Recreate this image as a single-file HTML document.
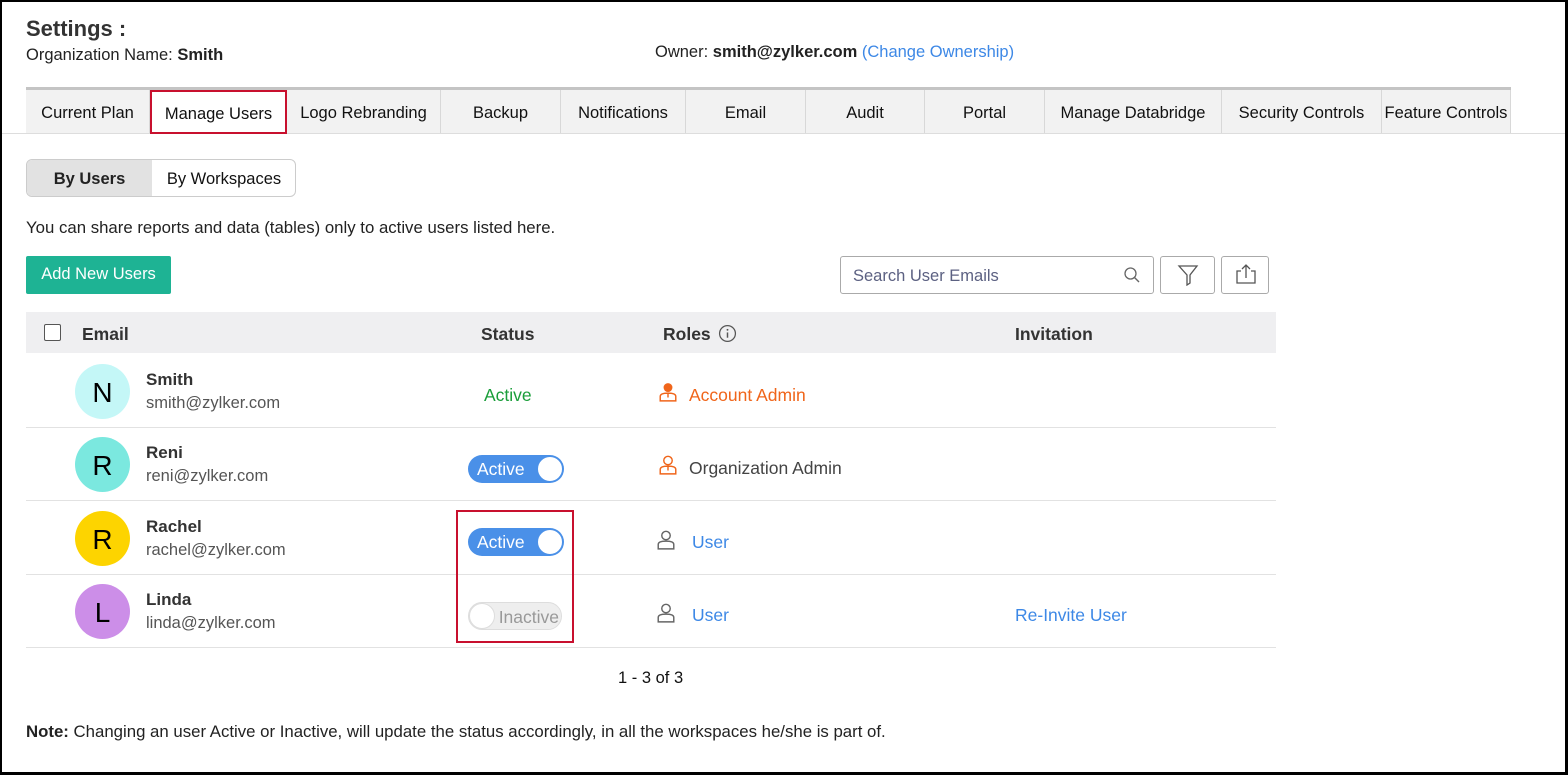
<!DOCTYPE html>
<html><head><meta charset="utf-8"><style>
*{box-sizing:border-box;margin:0;padding:0}
body{width:1568px;height:775px;overflow:hidden;background:#fff;font-family:"Liberation Sans",sans-serif;color:#222;position:relative}
.frame{position:absolute;left:0;top:0;width:1568px;height:775px;border:2px solid #000;border-right-width:3px;border-bottom-width:3px}
.a{position:absolute;white-space:nowrap}
.tab{position:absolute;top:90px;height:43px;background:#f2f2f2;border-right:1px solid #d8d8d8;font-size:16.5px;line-height:47px;text-align:center;color:#111}
.row{position:absolute;left:26px;width:1250px;border-bottom:1px solid #e2e2e2}
.av{position:absolute;left:75px;width:55px;height:55px;border-radius:50%;font-size:28px;line-height:57px;text-align:center;color:#000}
.nm{position:absolute;left:146px;font-size:17px;font-weight:bold;color:#333}
.em{position:absolute;left:146px;font-size:16.5px;color:#555}
.tg{position:absolute;left:468px;width:96px;height:28px;border-radius:14px;background:#4a90e8;color:#fff;font-size:17.5px;line-height:29px;padding-left:9px}
.tg i{position:absolute;right:1px;top:1px;width:26px;height:26px;border-radius:50%;background:#fff;border:1px solid #4a90e8}
.blue{color:#3d88e6}
</style></head><body>
<div class="a" style="left:26px;top:16px;font-size:22px;font-weight:bold;color:#333">Settings :</div>
<div class="a" style="left:26px;top:46px;font-size:16.5px;color:#222">Organization Name: <b>Smith</b></div>
<div class="a" style="left:655px;top:43px;font-size:16.5px;color:#222">Owner: <b>smith@zylker.com</b> <span class="blue">(Change Ownership)</span></div>
<div class="a" style="left:26px;top:87px;width:1485px;height:3px;background:#c4c4c4"></div>
<div class="a" style="left:0;top:133px;width:1568px;height:1px;background:#ddd"></div>
<div class="tab" style="left:26px;width:124px">Current Plan</div>
<div class="tab" style="left:150px;width:137px;background:#fff;border:2px solid #c8102e;top:90px;height:44px;line-height:44px">Manage Users</div>
<div class="tab" style="left:287px;width:154px">Logo Rebranding</div>
<div class="tab" style="left:441px;width:120px">Backup</div>
<div class="tab" style="left:561px;width:125px">Notifications</div>
<div class="tab" style="left:686px;width:120px">Email</div>
<div class="tab" style="left:806px;width:119px">Audit</div>
<div class="tab" style="left:925px;width:120px">Portal</div>
<div class="tab" style="left:1045px;width:177px">Manage Databridge</div>
<div class="tab" style="left:1222px;width:160px">Security Controls</div>
<div class="tab" style="left:1382px;width:129px">Feature Controls</div>

<div class="a" style="left:26px;top:159px;width:270px;height:38px;border:1px solid #ccc;border-radius:6px;overflow:hidden">
<div class="a" style="left:0;top:0;width:125px;height:36px;background:#e2e2e2;font-weight:bold;font-size:16.5px;line-height:39px;text-align:center;color:#222">By Users</div>
<div class="a" style="left:125px;top:0;width:144px;height:36px;font-size:16.5px;line-height:39px;text-align:center;color:#111">By Workspaces</div></div>
<div class="a" style="left:26px;top:218px;font-size:16.8px;color:#222">You can share reports and data (tables) only to active users listed here.</div>
<div class="a" style="left:26px;top:256px;width:145px;height:38px;background:#1eb394;border-radius:2px;color:#fff;font-size:16.5px;line-height:37px;text-align:center">Add New Users</div>
<div class="a" style="left:840px;top:256px;width:314px;height:38px;border:1px solid #aaa;border-radius:3px;font-size:16.5px;line-height:39px;padding-left:12px;color:#5c6182">Search User Emails
<svg style="position:absolute;right:12px;top:9px" width="18" height="18" viewBox="0 0 18 18"><circle cx="7.5" cy="7.5" r="5.5" fill="none" stroke="#666" stroke-width="1.3"/><path d="M11.5 11.5L16 16" stroke="#666" stroke-width="1.4"/></svg></div>
<div class="a" style="left:1160px;top:256px;width:55px;height:38px;border:1px solid #aaa;border-radius:3px">
<svg style="position:absolute;left:16px;top:7px" width="22" height="22" viewBox="0 0 22 22"><path d="M2 2H20L13 11V19L10 21V11Z" fill="none" stroke="#555" stroke-width="1.3"/></svg></div>
<div class="a" style="left:1221px;top:256px;width:48px;height:38px;border:1px solid #aaa;border-radius:3px">
<svg style="position:absolute;left:12px;top:6px" width="24" height="24" viewBox="0 0 24 24"><path d="M7 8H3V20H21V8H17M12 15V2M8 6L12 2L16 6" fill="none" stroke="#555" stroke-width="1.3"/></svg></div>

<div class="a" style="left:26px;top:312px;width:1250px;height:41px;background:#efeff1"></div>
<div class="a" style="left:44px;top:324px;width:17px;height:17px;border:1.5px solid #555;border-radius:2px;background:#fff"></div>
<div class="a" style="left:82px;top:324px;font-size:17.5px;font-weight:bold;color:#333">Email</div>
<div class="a" style="left:481px;top:324px;font-size:17.5px;font-weight:bold;color:#333">Status</div>
<div class="a" style="left:663px;top:324px;font-size:17.5px;font-weight:bold;color:#333">Roles <svg style="vertical-align:-3px;margin-left:2px" width="19" height="19" viewBox="0 0 18 18"><circle cx="9" cy="9" r="7.5" fill="none" stroke="#555" stroke-width="1.2"/><path d="M9 8V13" stroke="#555" stroke-width="1.4"/><circle cx="9" cy="5.5" r="0.9" fill="#555"/></svg></div>
<div class="a" style="left:1015px;top:324px;font-size:17.5px;font-weight:bold;color:#333">Invitation</div>

<div class="row" style="top:353px;height:75px"></div>
<div class="row" style="top:428px;height:73px"></div>
<div class="row" style="top:501px;height:74px"></div>
<div class="row" style="top:575px;height:73px"></div>

<div class="av" style="top:364px;background:#c4f7f7">N</div>
<div class="nm" style="top:370px">Smith</div><div class="em" style="top:394px">smith@zylker.com</div>
<div class="a" style="left:484px;top:385px;font-size:17.5px;color:#1a9e3a">Active</div>
<svg class="a" style="left:658px;top:382px" width="20" height="20" viewBox="0 0 18 18"><circle cx="9" cy="5" r="4" fill="#f0651a"/><path d="M2 17V13Q2 10 9 10Q16 10 16 13V17ZM9 10V14" fill="none" stroke="#f0651a" stroke-width="1.3"/></svg>
<div class="a" style="left:689px;top:385px;font-size:17.5px;color:#f0651a">Account Admin</div>

<div class="av" style="top:437px;background:#7be8df">R</div>
<div class="nm" style="top:443px">Reni</div><div class="em" style="top:467px">reni@zylker.com</div>
<div class="tg" style="top:455px">Active<i></i></div>
<svg class="a" style="left:658px;top:455px" width="20" height="20" viewBox="0 0 18 18"><circle cx="9" cy="5" r="3.8" fill="none" stroke="#f0651a" stroke-width="1.3"/><path d="M2 17V13Q2 10 9 10Q16 10 16 13V17ZM9 10V14" fill="none" stroke="#f0651a" stroke-width="1.3"/></svg>
<div class="a" style="left:689px;top:458px;font-size:17.5px;color:#444">Organization Admin</div>

<div class="av" style="top:511px;background:#fdd400">R</div>
<div class="nm" style="top:517px">Rachel</div><div class="em" style="top:541px">rachel@zylker.com</div>
<div class="tg" style="top:528px">Active<i></i></div>
<svg class="a" style="left:656px;top:530px" width="20" height="20" viewBox="0 0 18 18"><circle cx="9" cy="5" r="3.8" fill="none" stroke="#666" stroke-width="1.3"/><path d="M2 17V13Q2 10 9 10Q16 10 16 13V17Z" fill="none" stroke="#666" stroke-width="1.3"/></svg>
<div class="a blue" style="left:692px;top:532px;font-size:17.5px">User</div>

<div class="av" style="top:584px;background:#cc8ee8">L</div>
<div class="nm" style="top:590px">Linda</div><div class="em" style="top:614px">linda@zylker.com</div>
<div class="a" style="left:468px;top:602px;width:94px;height:28px;border-radius:14px;background:#eee;border:1px solid #ddd;color:#999;font-size:17.5px;line-height:28px;text-align:right;padding-right:2px">Inactive<i style="position:absolute;left:0;top:0;width:26px;height:26px;border-radius:50%;background:#fff;border:1px solid #ddd"></i></div>
<svg class="a" style="left:656px;top:603px" width="20" height="20" viewBox="0 0 18 18"><circle cx="9" cy="5" r="3.8" fill="none" stroke="#666" stroke-width="1.3"/><path d="M2 17V13Q2 10 9 10Q16 10 16 13V17Z" fill="none" stroke="#666" stroke-width="1.3"/></svg>
<div class="a blue" style="left:692px;top:605px;font-size:17.5px">User</div>
<div class="a blue" style="left:1015px;top:605px;font-size:17.5px">Re-Invite User</div>

<div class="a" style="left:456px;top:510px;width:118px;height:133px;border:2px solid #c8102e"></div>
<div class="a" style="left:618px;top:669px;font-size:16.5px;color:#111">1 - 3 of 3</div>
<div class="a" style="left:26px;top:722px;font-size:16.8px;color:#222"><b>Note:</b> Changing an user Active or Inactive, will update the status accordingly, in all the workspaces he/she is part of.</div>
<div class="frame"></div>
</body></html>
